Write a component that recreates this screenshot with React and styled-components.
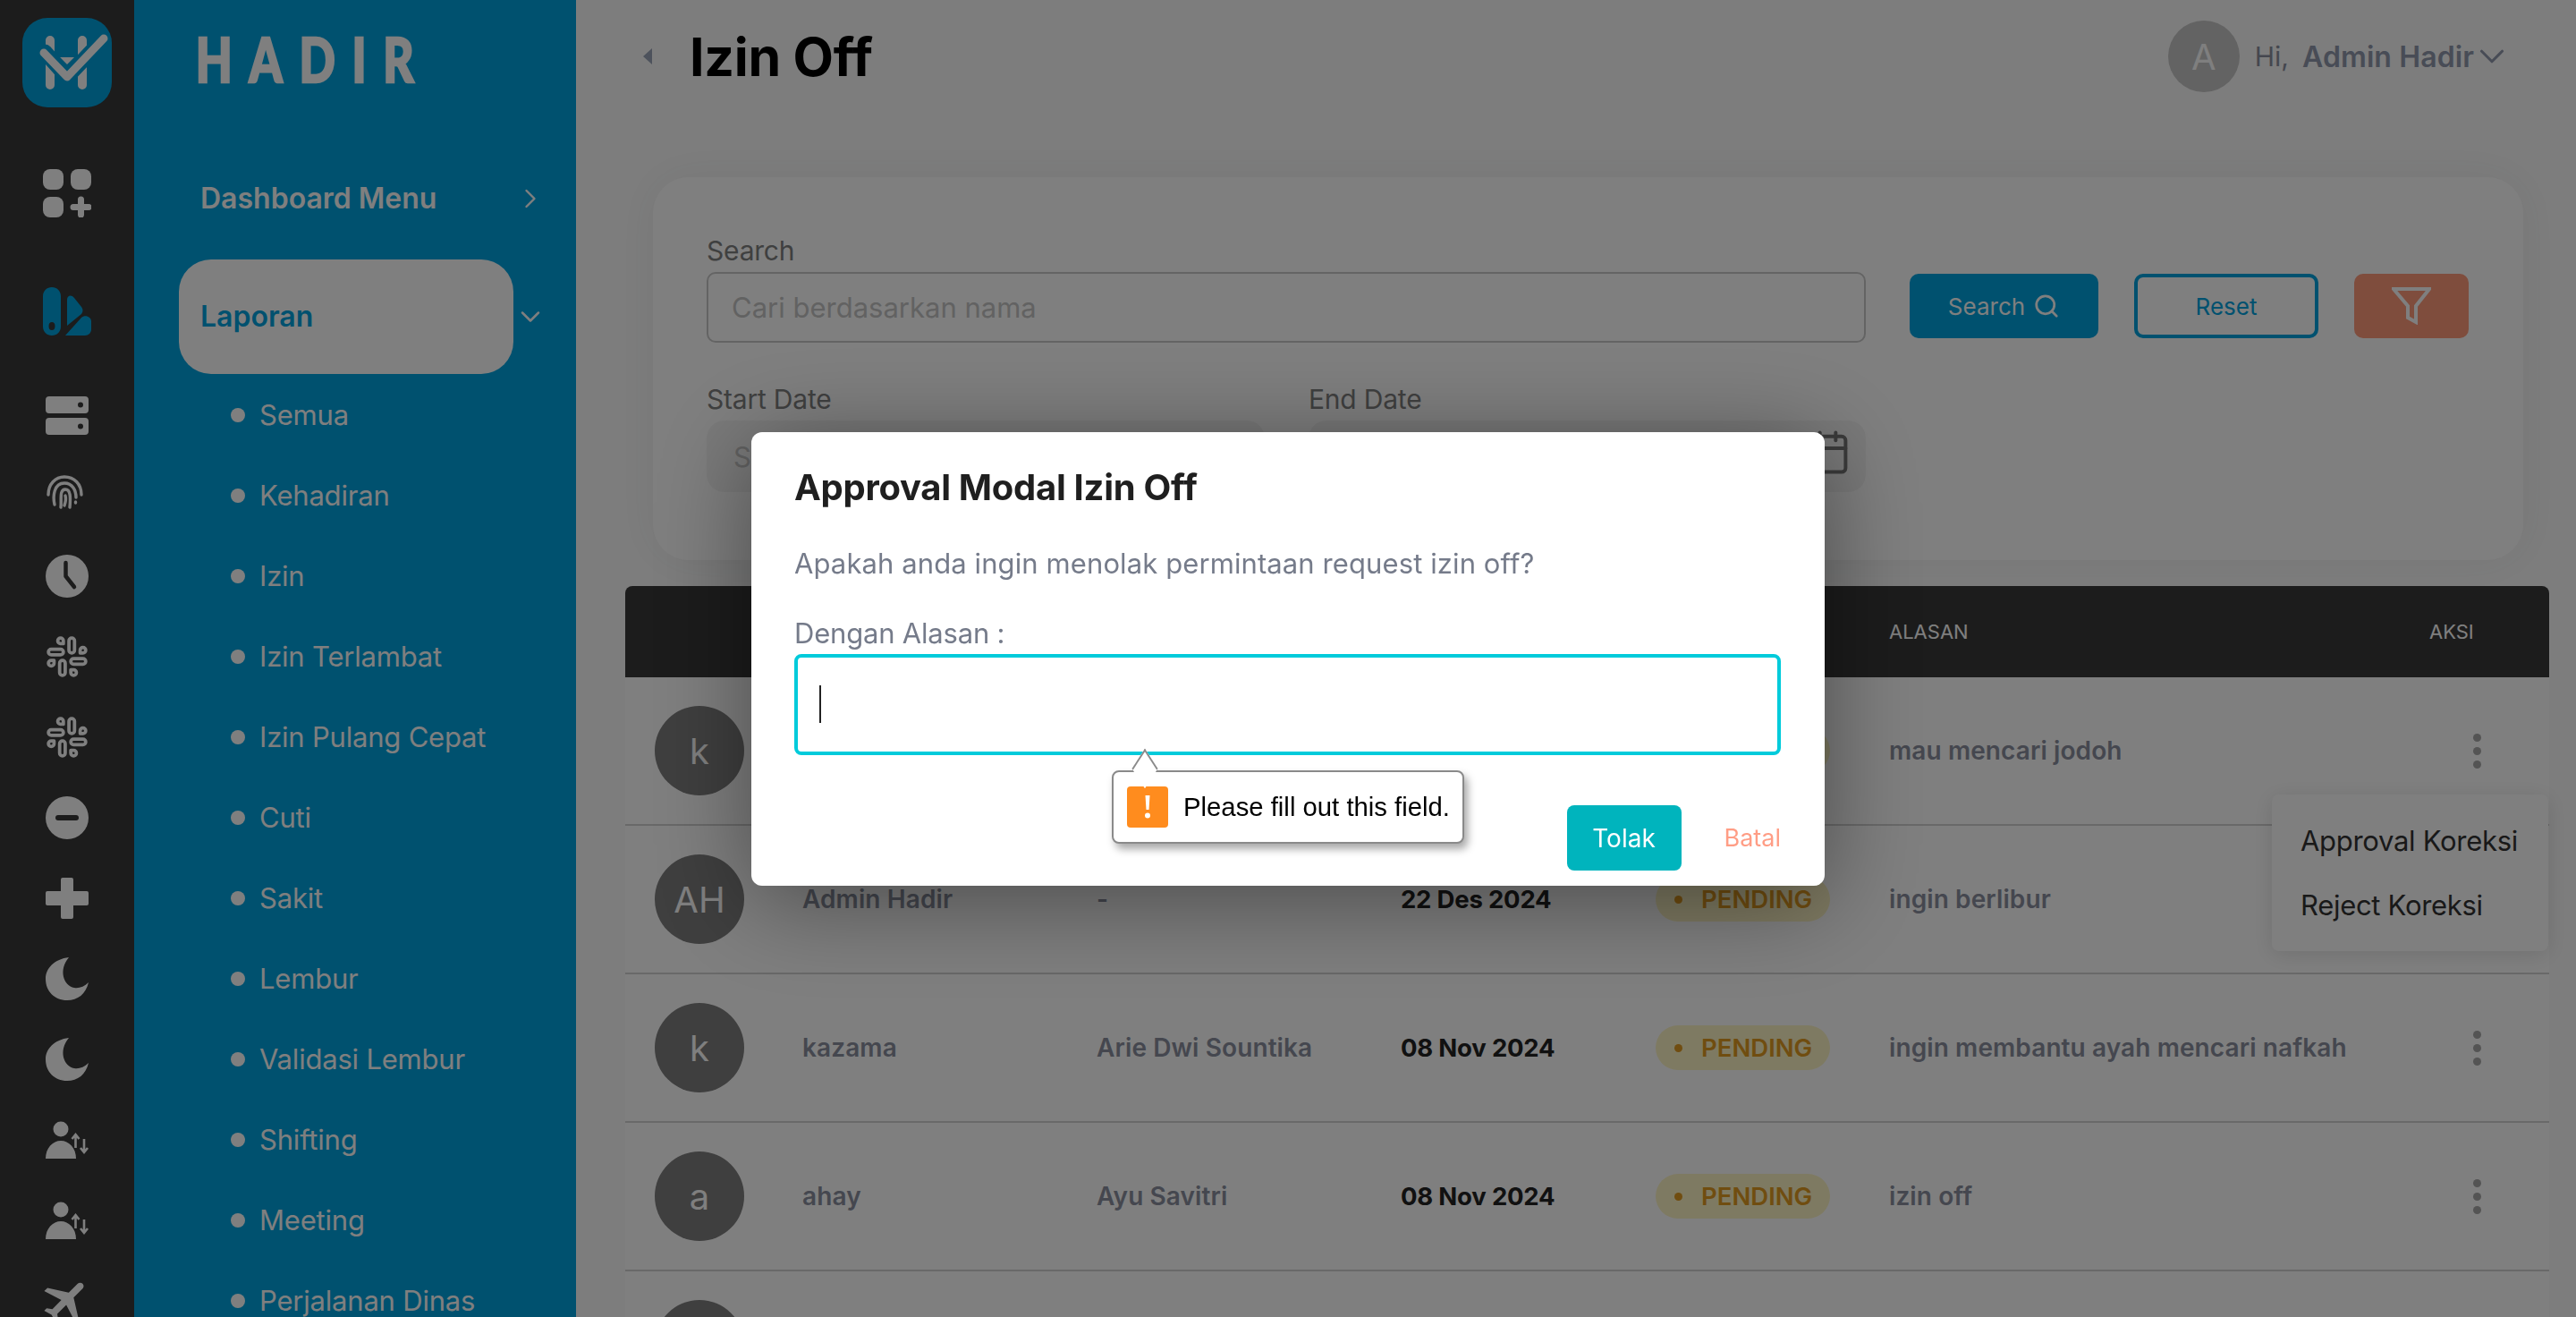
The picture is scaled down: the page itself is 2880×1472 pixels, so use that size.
import React from 'react';
import styled, { createGlobalStyle } from 'styled-components';
import { ChevronRight, ChevronDown, Slack, Search as SearchGlyph, Calendar } from 'lucide-react';
import { MdFlight } from 'react-icons/md';

const Global = createGlobalStyle`
  * { box-sizing: border-box; }
  html, body { margin: 0; padding: 0; height: 100%; }
  body { font-family: Inter, "Noto Sans", sans-serif; background: #fbfbfb; overflow: hidden; }
`;

const Page = styled.div`display: flex; height: 100vh; overflow: hidden; position: relative;`;

/* rail */
const Rail = styled.nav`width: 150px; flex: none; background: #383838; display: flex; flex-direction: column; align-items: center; padding-top: 20px;`;
const LogoTile = styled.div`width: 100px; height: 100px; border-radius: 28px; background: #00a2de; display: flex;`;
const RailSlot = styled.div`height: 90px; width: 100%; flex: none; display: flex; align-items: center; justify-content: center; margin-top: ${p => p.$top || 0}px; color: ${p => p.$active ? '#00a2de' : '#fff'};
  svg { display: block; margin-bottom: ${p => p.$lift || 0}px; margin-right: ${p => p.$shift || 0}px; }`;

/* sidebar */
const Side = styled.aside`width: 494px; flex: none; background: #00a2de; color: #fff; display: flex; flex-direction: column; overflow: hidden;`;
const Brand = styled.div`height: 177px; flex: none; padding: 20px 0 0 69px; font-size: 68px; line-height: 92px; font-weight: 900; letter-spacing: 24px; -webkit-text-stroke: 2.500px #fff; font-family: Lato, Inter, sans-serif; transform: scaleX(.78); transform-origin: 68px 0;`;
const MenuRow = styled.div`height: 90px; flex: none; display: flex; align-items: center; justify-content: space-between; padding: 0 33px 1px 74px; font-size: 32px; font-weight: 600;`;
const ActiveRow = styled.div`display: flex; align-items: center; height: 128px; flex: none; margin: 23px 0 2px 50px; color: #00a2de; font-size: 32px; font-weight: 600;`;
const ActivePill = styled.div`width: 374px; height: 128px; background: #fff; border-radius: 36px; padding: 0 0 2px 24px; display: flex; align-items: center;`;
const ActiveChevron = styled.span`margin-left: 1px; display: flex; color: #fff;`;
const SubItem = styled.div`height: 90px; flex: none; display: flex; align-items: center; padding: 0 0 3px 108px; font-size: 31px; font-weight: 400; letter-spacing: -0.2px;
  &::before { content: ''; width: 16px; height: 16px; border-radius: 50%; background: #fff; margin-right: 16px; flex: none; }`;

/* main */
const Main = styled.main`flex: 1; min-width: 0; display: flex; flex-direction: column;`;
const Header = styled.header`height: 126px; flex: none; display: flex; align-items: center; padding: 0 71px 0 75px;`;
const Title = styled.h1`margin: 0 0 0 42px; font-size: 59px; font-weight: 700; color: #000; letter-spacing: -0.3px; flex: 1;`;
const Avatar = styled.div`width: ${p => p.$size || 100}px; height: ${p => p.$size || 100}px; border-radius: 50%; background: #c6c6c6; color: #fff; display: flex; align-items: center; justify-content: center; font-size: 40px; flex: none;`;
const DarkAvatar = styled(Avatar)`background: #7e7e7e;`;
const Hi = styled.span`margin-left: 17px; font-size: 30px; color: #8a8f9e;`;
const UserName = styled.span`margin-left: 15px; font-size: 32px; font-weight: 600; color: #9198ac; letter-spacing: 0.1px;`;
const UserChevron = styled.span`display: flex; margin-left: -3px; color: #9198ac;`;

const Card = styled.section`margin: 72px 59px 0 86px; height: 428px; flex: none; background: #fff; border-radius: 40px; padding: 62px 61px 0 60px; box-shadow: 0 0 50px rgba(40,60,50,.07);`;
const SearchLine = styled.div`display: flex; align-items: flex-start;`;
const Field = styled.div`display: flex; flex-direction: column; width: ${p => p.$w ? p.$w + 'px' : 'auto'}; flex: none;`;
const Label = styled.label`font-size: 30px; line-height: 40px; color: #7f8080; letter-spacing: -0.2px;`;
const TextBox = styled.div`height: 79px; margin-top: 4px; border: 2px solid #c8c8c8; border-radius: 10px; padding-left: 26px; display: flex; align-items: center; font-size: 31px; color: #c4c4c4;`;
const DateGrid = styled.div`display: grid; grid-template-columns: 624px 623px; column-gap: 49px; width: 1296px; margin-top: 43px;`;
const DateBox = styled.div`height: 80px; margin-top: 4px; background: #f4f4f4; border-radius: 20px; padding: 0 16px 0 30px; display: flex; align-items: center; justify-content: space-between; font-size: 31px; color: #c4c4c4;`;
const CalendarWrap = styled.span`display: flex; color: #777; margin-top: -10px;`;
const Actions = styled.div`display: flex; gap: 40px; margin: 46px 0 0 49px;`;
const BtnBase = styled.button`height: 72px; border-radius: 10px; font: 400 26px Inter, sans-serif; display: flex; align-items: center; justify-content: center; padding: 0; cursor: pointer;`;
const SearchBtn = styled(BtnBase)`width: 211px; background: #00a2de; color: #fff; border: none; gap: 9px;`;
const ResetBtn = styled(BtnBase)`width: 206px; background: transparent; color: #00a2de; border: 4px solid #00a2de;`;
const FilterBtn = styled(BtnBase)`width: 128px; background: #ff9a7b; border: none; color: #fff;`;

const Table = styled.section`margin: 29px 30px 0 55px; position: relative; flex: none;`;
const columns = '198px 329px 340px 285px 261px 1fr 80px';
const HeadRow = styled.div`height: 102px; background: #383838; border-radius: 8px 8px 0 0; display: grid; grid-template-columns: ${columns}; align-items: center; color: #fff; font-size: 22px; padding-right: 40px;`;
const HeadCell = styled.div`margin-left: ${p => p.$pull || 0}px;`;
const Row = styled.div`height: 166px; background: #fff; border-bottom: 2px solid #d2d2d2; display: grid; grid-template-columns: ${columns}; align-items: center; padding-right: 40px;`;
const AvatarCell = styled.div`padding-left: 33px;`;
const Cell = styled.div`font-size: 28px; font-weight: 600; color: #8a8f9e; letter-spacing: 0.1px; white-space: nowrap;`;
const DateCell = styled(Cell)`color: #222; font-weight: 700; font-size: 27.500px; letter-spacing: -0.2px;`;
const Pill = styled.div`width: 195px; height: 50px; border-radius: 25px; background: #fdf4c4; color: #e09a20; font-size: 27.500px; font-weight: 600; display: flex; align-items: center; padding-left: 21px;
  &::before { content: ''; width: 9px; height: 9px; border-radius: 50%; background: #e09a20; margin-right: 21px; flex: none; }`;
const Dots = styled.div`display: flex; flex-direction: column; align-items: flex-end; gap: 6px; padding-right: 36px; justify-self: end;
  i { width: 9px; height: 9px; border-radius: 50%; background: #a8a8a8; display: block; }`;
const Dropdown = styled.div`position: absolute; right: 1px; top: 233px; width: 309px; height: 175px; background: #fff; border-radius: 8px; box-shadow: 0 4px 24px rgba(0,0,0,.12); padding: 15px 0 0 32px; font-size: 31px; color: #333;`;
const DropItem = styled.div`height: 72px; display: flex; align-items: center; letter-spacing: -0.3px;`;

/* modal */
const Overlay = styled.div`position: fixed; inset: 0; background: rgba(0,0,0,.5); display: flex; justify-content: center; align-items: flex-start; padding-top: 483px;`;
const Modal = styled.div`position: relative; width: 1200px; height: 507px; background: #fff; border-radius: 12px; box-shadow: 0 16px 110px rgba(0,0,0,.42); padding: 36px 49px 0 48px;`;
const ModalTitle = styled.h2`margin: 0; font-size: 40px; line-height: 52px; font-weight: 700; color: #1f1f1f; letter-spacing: -0.3px;`;
const ModalText = styled.p`margin: 38px 0 0; font-size: 31px; line-height: 42px; color: #757b8a; letter-spacing: 0.1px;`;
const ModalLabel = styled.label`display: block; margin-top: 36px; font-size: 31px; line-height: 42px; color: #757b8a; letter-spacing: -0.2px;`;
const ReasonBox = styled.div`height: 113px; margin: 2px 0 0 0; border: 4px solid #00cbdb; border-radius: 8px; padding-left: 24px; display: flex; align-items: center;`;
const Caret = styled.span`width: 2px; height: 42px; background: #222; margin-top: -2px;`;
const ModalFoot = styled.div`position: absolute; right: 49px; bottom: 17px; display: flex; align-items: center; gap: 48px; font-size: 27px;`;
const RejectBtn = styled.button`width: 128px; height: 73px; background: #00b4bd; color: #fff; border: none; border-radius: 8px; font: 400 28px Inter, sans-serif;`;
const CancelLink = styled.span`color: #ff9d85;`;
const Tip = styled.div`position: absolute; left: 403px; top: 378px; width: 394px; height: 82px; background: #fff; border: 2px solid #8a8a8a; border-radius: 8px; box-shadow: 4px 6px 10px rgba(0,0,0,.35); display: flex; align-items: center; padding-left: 15px; font: 400 29.300px "Liberation Sans", Arial, sans-serif; color: #000;
  &::before { content: ''; position: absolute; left: 22px; top: -17px; width: 24px; height: 24px; background: #fff; border-left: 2px solid #8a8a8a; border-top: 2px solid #8a8a8a; transform: rotate(45deg) skew(12deg, 12deg); }`;
const TipIcon = styled.span`width: 46px; height: 46px; flex: none; background: #ff8c1e; border-radius: 4px; display: flex; align-items: center; justify-content: center; margin-right: 17px;`;

/* drawn icons */
const LogoMark = () => (
  <svg width="100" height="100" viewBox="0 0 100 100" fill="none">
    <path d="M31 25V75M67 25V75" stroke="#fff" strokeWidth="10" strokeLinecap="round" />
    <path d="M42 44H58L50 52Z" fill="#fff" />
    <path d="M25 38L50 66L90 24" stroke="#00a2de" strokeWidth="17" strokeLinecap="round" strokeLinejoin="round" />
    <path d="M24 39L50 66L91 23" stroke="#fff" strokeWidth="9" strokeLinecap="round" strokeLinejoin="round" />
  </svg>
);
const GridPlus = () => (
  <svg width="54" height="54" viewBox="0 0 54 54" fill="currentColor">
    <rect width="23" height="23" rx="8" /><rect x="31" width="23" height="23" rx="8" /><rect y="31" width="23" height="23" rx="8" />
    <path d="M42.500 34V51M34 42.500H51" stroke="currentColor" strokeWidth="7" strokeLinecap="round" />
  </svg>
);
const Swatch = () => (
  <svg width="54" height="54" viewBox="0 0 54 54" fill="currentColor">
    <path fillRule="evenodd" d="M10 0C15.500 0 20 4 20 10V44C20 50 15.500 54 10 54C4.500 54 0 50 0 44V10C0 4 4.500 0 10 0ZM10 39A3.500 4.500 0 1 0 10 48A3.500 4.500 0 1 0 10 39Z" />
    <path d="M27 43V14C27 9 32 8 35 12L43 22C45 25 45 27 43 30Z" />
    <path d="M25 54L43 34C47 30 54 33 54 38V47C54 51 51 54 47 54Z" />
  </svg>
);
const ServerIcon = () => (
  <svg width="48" height="43" viewBox="0 0 48 43" fill="currentColor">
    <path fillRule="evenodd" d="M4 0H44A4 4 0 0 1 48 4V15A4 4 0 0 1 44 19H4A4 4 0 0 1 0 15V4A4 4 0 0 1 4 0ZM39 6.500a3 3 0 1 0 0.010 6a3 3 0 1 0 -0.010 -6Z" />
    <path fillRule="evenodd" d="M4 24H44A4 4 0 0 1 48 28V39A4 4 0 0 1 44 43H4A4 4 0 0 1 0 39V28A4 4 0 0 1 4 24ZM39 30.500a3 3 0 1 0 0.010 6a3 3 0 1 0 -0.010 -6Z" />
  </svg>
);
const FingerprintIcon = () => (
  <svg width="41" height="38" viewBox="0 0 41 38" fill="none" stroke="currentColor" strokeWidth="3.400" strokeLinecap="round">
    <path d="M2 22C2 10 10 2 20 2C31 2 39 10 39 22" />
    <path d="M9 33C7 24 8 9 20 9C29 9 33 17 33 25M32.500 31V30" />
    <path d="M16 36C17 28 14 16 21 16C27 16 27 25 26 36" />
    <path d="M21 23C22 26 21 31 20 34" />
  </svg>
);
const ClockIcon = () => (
  <svg width="48" height="48" viewBox="0 0 48 48">
    <circle cx="24" cy="24" r="24" fill="currentColor" />
    <path d="M22.500 9V24L32 36" stroke="#383838" strokeWidth="4.500" strokeLinecap="round" strokeLinejoin="round" fill="none" />
  </svg>
);
const MinusIcon = () => (
  <svg width="48" height="48" viewBox="0 0 48 48">
    <circle cx="24" cy="24" r="24" fill="currentColor" />
    <path d="M14 24H34" stroke="#383838" strokeWidth="6" strokeLinecap="round" />
  </svg>
);
const PlusIcon = () => (
  <svg width="48" height="46" viewBox="0 0 48 46" fill="currentColor">
    <path d="M17 2A2 2 0 0 1 19 0H29A2 2 0 0 1 31 2V15H46A2 2 0 0 1 48 17V29A2 2 0 0 1 46 31H31V44A2 2 0 0 1 29 46H19A2 2 0 0 1 17 44V31H2A2 2 0 0 1 0 29V17A2 2 0 0 1 2 15H17Z" />
  </svg>
);
const MoonIcon = () => (
  <svg width="48" height="48" viewBox="0 0 48 48" fill="currentColor">
    <path d="M26 0C10 2 0 12 0 24C0 38 10 48 24 48C36 48 45 41 48 28C43 33 37 35 32 34C20 32 14 14 26 0Z" />
  </svg>
);
const UserSwap = () => (
  <svg width="48" height="42" viewBox="0 0 48 42" fill="none">
    <circle cx="17" cy="9" r="8.500" fill="currentColor" />
    <path d="M0 42C0 30 8 22 17 22C26 22 34 30 34 42Z" fill="currentColor" />
    <path d="M33.500 30V15M29.500 20L33.500 15L37.500 20" stroke="currentColor" strokeWidth="2.600" />
    <path d="M43 20V35M39 30L43 35L47 30" stroke="currentColor" strokeWidth="2.600" />
  </svg>
);
const BackCaret = () => (
  <svg width="10" height="18" viewBox="0 0 10 18"><path d="M10 0V18L0 9Z" fill="#9aa5b8" /></svg>
);
const Funnel = () => (
  <svg width="44" height="42" viewBox="0 0 44 42" fill="none">
    <path d="M2 2H42L27 21V39L18 34V21Z" stroke="currentColor" strokeWidth="4" />
  </svg>
);
const Bang = () => (
  <svg width="8" height="26" viewBox="0 0 8 26" fill="#fff">
    <path d="M1.500 0H6.500L5.500 16H2.500Z" /><circle cx="4" cy="22.500" r="3" />
  </svg>
);

const subMenu = ['Semua', 'Kehadiran', 'Izin', 'Izin Terlambat', 'Izin Pulang Cepat', 'Cuti', 'Sakit', 'Lembur', 'Validasi Lembur', 'Shifting', 'Meeting', 'Perjalanan Dinas'];

const rows = [
  { a: 'k', name: 'kazama', job: 'Arie Dwi Sountika', date: '22 Des 2024', reason: 'mau mencari jodoh' },
  { a: 'AH', name: 'Admin Hadir', job: '-', date: '22 Des 2024', reason: 'ingin berlibur' },
  { a: 'k', name: 'kazama', job: 'Arie Dwi Sountika', date: '08 Nov 2024', reason: 'ingin membantu ayah mencari nafkah' },
  { a: 'a', name: 'ahay', job: 'Ayu Savitri', date: '08 Nov 2024', reason: 'izin off' },
];

export default function App() {
  return (
    <>
      <Global />
      <Page>
        <Rail>
          <LogoTile><LogoMark /></LogoTile>
          <RailSlot $top={51}><GridPlus /></RailSlot>
          <RailSlot $top={42} $active><Swatch /></RailSlot>
          <RailSlot $top={26}><ServerIcon /></RailSlot>
          <RailSlot $lift={8} $shift={6}><FingerprintIcon /></RailSlot>
          <RailSlot><ClockIcon /></RailSlot>
          <RailSlot><Slack size={50} strokeWidth={1.8} /></RailSlot>
          <RailSlot><Slack size={50} strokeWidth={1.8} /></RailSlot>
          <RailSlot><MinusIcon /></RailSlot>
          <RailSlot><PlusIcon /></RailSlot>
          <RailSlot><MoonIcon /></RailSlot>
          <RailSlot><MoonIcon /></RailSlot>
          <RailSlot><UserSwap /></RailSlot>
          <RailSlot><UserSwap /></RailSlot>
          <RailSlot><MdFlight size={62} style={{ transform: 'rotate(45deg)' }} /></RailSlot>
        </Rail>
        <Side>
          <Brand>HADIR</Brand>
          <MenuRow>Dashboard Menu <ChevronRight size={36} strokeWidth={1.6} /></MenuRow>
          <ActiveRow>
            <ActivePill>Laporan</ActivePill>
            <ActiveChevron><ChevronDown size={36} strokeWidth={1.7} /></ActiveChevron>
          </ActiveRow>
          {subMenu.map(s => <SubItem key={s}>{s}</SubItem>)}
        </Side>
        <Main>
          <Header>
            <BackCaret />
            <Title>Izin Off</Title>
            <Avatar $size={80}>A</Avatar>
            <Hi>Hi,</Hi>
            <UserName>Admin Hadir</UserName>
            <UserChevron><ChevronDown size={46} strokeWidth={1.6} /></UserChevron>
          </Header>
          <Card>
            <SearchLine>
              <Field $w={1296}>
                <Label>Search</Label>
                <TextBox>Cari berdasarkan nama</TextBox>
              </Field>
              <Actions>
                <SearchBtn>Search <SearchGlyph size={30} strokeWidth={2.2} /></SearchBtn>
                <ResetBtn>Reset</ResetBtn>
                <FilterBtn><Funnel /></FilterBtn>
              </Actions>
            </SearchLine>
            <DateGrid>
              <Field>
                <Label>Start Date</Label>
                <DateBox>Start Date</DateBox>
              </Field>
              <Field>
                <Label>End Date</Label>
                <DateBox>End Date <CalendarWrap><Calendar size={53} strokeWidth={1.8} /></CalendarWrap></DateBox>
              </Field>
            </DateGrid>
          </Card>
          <Table>
            <HeadRow>
              <HeadCell />
              <HeadCell>NAMA</HeadCell>
              <HeadCell>PENGGANTI</HeadCell>
              <HeadCell>TANGGAL</HeadCell>
              <HeadCell>STATUS</HeadCell>
              <HeadCell>ALASAN</HeadCell>
              <HeadCell $pull={-14}>AKSI</HeadCell>
            </HeadRow>
            {rows.map((r, i) => (
              <Row key={i}>
                <AvatarCell><DarkAvatar>{r.a}</DarkAvatar></AvatarCell>
                <Cell>{r.name}</Cell>
                <Cell>{r.job}</Cell>
                <DateCell>{r.date}</DateCell>
                <Pill>PENDING</Pill>
                <Cell>{r.reason}</Cell>
                <Dots><i /><i /><i /></Dots>
              </Row>
            ))}
            <Row><AvatarCell><DarkAvatar /></AvatarCell></Row>
            <Dropdown>
              <DropItem>Approval Koreksi</DropItem>
              <DropItem>Reject Koreksi</DropItem>
            </Dropdown>
          </Table>
        </Main>
        <Overlay>
          <Modal>
            <ModalTitle>Approval Modal Izin Off</ModalTitle>
            <ModalText>Apakah anda ingin menolak permintaan request izin off?</ModalText>
            <ModalLabel>Dengan Alasan :</ModalLabel>
            <ReasonBox><Caret /></ReasonBox>
            <Tip><TipIcon><Bang /></TipIcon>Please fill out this field.</Tip>
            <ModalFoot>
              <RejectBtn>Tolak</RejectBtn>
              <CancelLink>Batal</CancelLink>
            </ModalFoot>
          </Modal>
        </Overlay>
      </Page>
    </>
  );
}
